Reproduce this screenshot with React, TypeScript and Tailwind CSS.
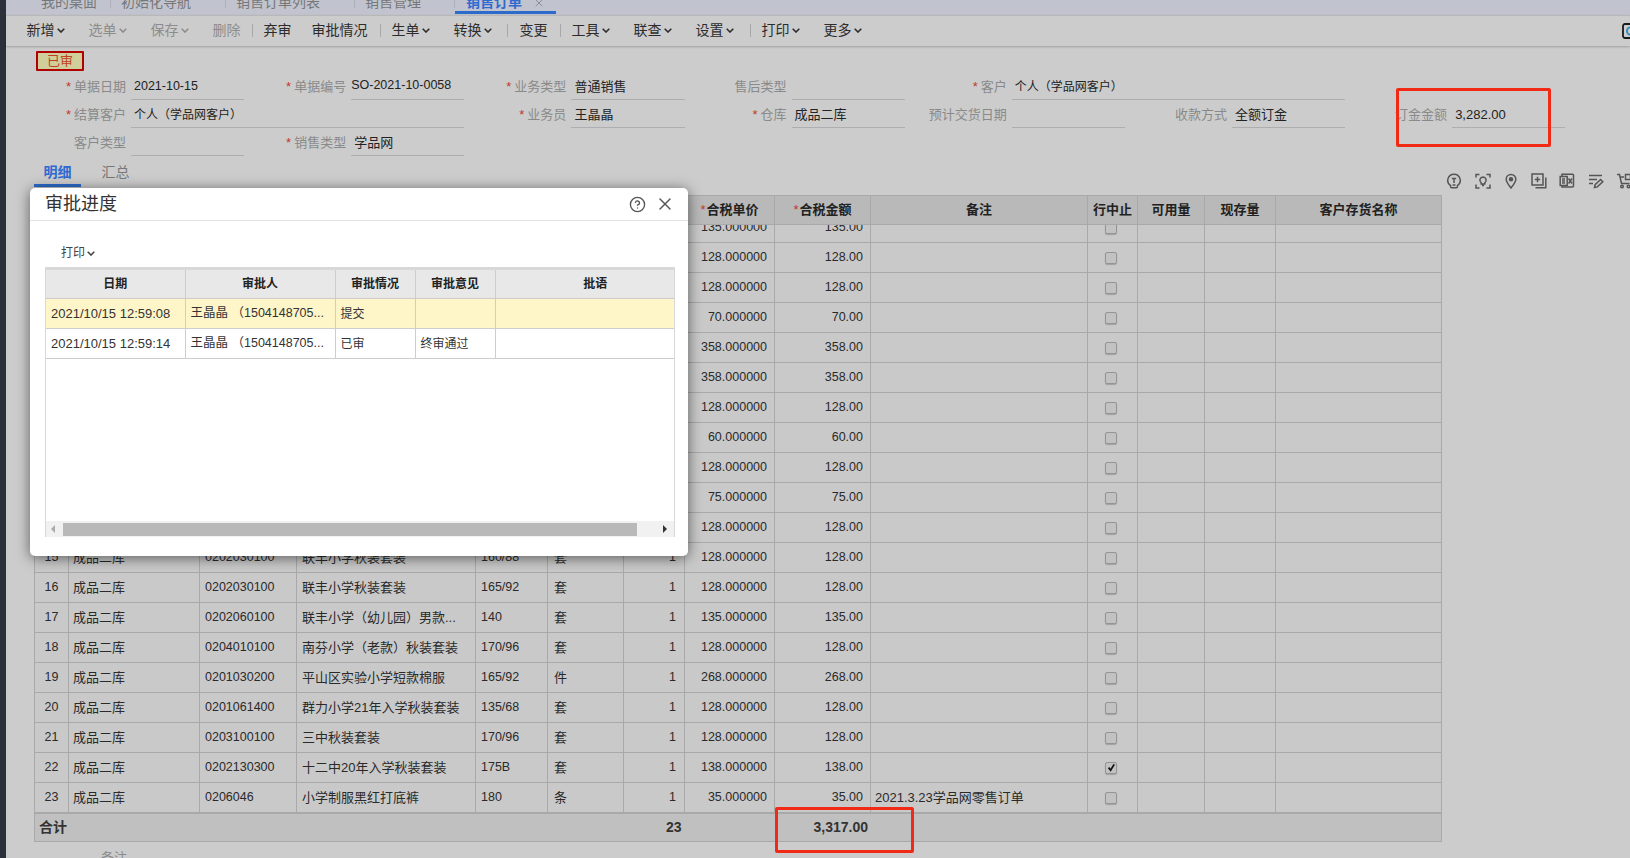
import { CircleHelp, X } from "lucide-react";

const Chev = () => (
  <svg viewBox="0 0 8 5" className="ml-[2px] w-[8px] h-[5px] shrink-0" fill="none" stroke="currentColor" strokeWidth="1.6">
    <path d="M0.7 0.8 L4 4 L7.3 0.8" />
  </svg>
);

const tools: { t: string; c?: boolean; d?: boolean; ml: string; sep?: boolean }[] = [
  { t: "新增", c: true, ml: "" },
  { t: "选单", c: true, d: true, ml: "ml-[24px]" },
  { t: "保存", c: true, d: true, ml: "ml-[24px]" },
  { t: "删除", d: true, ml: "ml-[24px]" },
  { t: "", sep: true, ml: "ml-[11px]" },
  { t: "弃审", ml: "ml-[11px]" },
  { t: "审批情况", ml: "ml-[20px]" },
  { t: "", sep: true, ml: "ml-[12px]" },
  { t: "生单", c: true, ml: "ml-[11px]" },
  { t: "转换", c: true, ml: "ml-[24px]" },
  { t: "", sep: true, ml: "ml-[15px]" },
  { t: "变更", ml: "ml-[12px]" },
  { t: "", sep: true, ml: "ml-[12px]" },
  { t: "工具", c: true, ml: "ml-[11px]" },
  { t: "联查", c: true, ml: "ml-[24px]" },
  { t: "设置", c: true, ml: "ml-[24px]" },
  { t: "", sep: true, ml: "ml-[16px]" },
  { t: "打印", c: true, ml: "ml-[11px]" },
  { t: "更多", c: true, ml: "ml-[24px]" },
];

const Field = ({ label, value, req, span, small, mono, date }: { label?: string; value?: string; req?: boolean; span?: boolean; small?: boolean; mono?: boolean; date?: boolean }) => (
  <div className={span ? "col-span-2 flex h-[28px]" : "flex h-[28px]"}>
    <div className="w-[107px] shrink-0 pr-[5px] pt-[2px] flex items-center justify-end text-[13px] text-[#8a8a8a] whitespace-nowrap">
      {req && <span className="text-[#c0392b] mr-[3px]">*</span>}
      {label}
    </div>
    <div
      className={
        "flex-1 border-b border-[#aeaeae] flex items-center text-[#222] whitespace-nowrap " +
        (mono
          ? "text-[12.5px] pb-[1px]"
          : date
            ? "text-[12.5px] pl-[3px] pt-[2px]"
            : small
              ? "text-[12px] pl-[3px] pt-[3px]"
              : "text-[13px] pl-[3px] pt-[3px]")
      }
    >
      {value}
    </div>
  </div>
);

type Row = [string, string, string, string, string, string, string, string, string, string, boolean];
const W = "成品二库";
const hidden = (price: string, amt: string): Row => ["", "", "", "", "", "", "", price, amt, "", false];
const rows: Row[] = [
  hidden("135.000000", "135.00"),
  hidden("128.000000", "128.00"),
  hidden("128.000000", "128.00"),
  hidden("70.000000", "70.00"),
  hidden("358.000000", "358.00"),
  hidden("358.000000", "358.00"),
  hidden("128.000000", "128.00"),
  hidden("60.000000", "60.00"),
  hidden("128.000000", "128.00"),
  hidden("75.000000", "75.00"),
  hidden("128.000000", "128.00"),
  ["15", W, "0202030100", "联丰小学秋装套装", "160/88", "套", "1", "128.000000", "128.00", "", false],
  ["16", W, "0202030100", "联丰小学秋装套装", "165/92", "套", "1", "128.000000", "128.00", "", false],
  ["17", W, "0202060100", "联丰小学（幼儿园）男款...", "140", "套", "1", "135.000000", "135.00", "", false],
  ["18", W, "0204010100", "南芬小学（老款）秋装套装", "170/96", "套", "1", "128.000000", "128.00", "", false],
  ["19", W, "0201030200", "平山区实验小学短款棉服", "165/92", "件", "1", "268.000000", "268.00", "", false],
  ["20", W, "0201061400", "群力小学21年入学秋装套装", "135/68", "套", "1", "128.000000", "128.00", "", false],
  ["21", W, "0203100100", "三中秋装套装", "170/96", "套", "1", "128.000000", "128.00", "", false],
  ["22", W, "0202130300", "十二中20年入学秋装套装", "175B", "套", "1", "138.000000", "138.00", "", true],
  ["23", W, "0206046", "小学制服黑红打底裤", "180", "条", "1", "35.000000", "35.00", "2021.3.23学品网零售订单", false],
];

const GRID = "grid grid-cols-[34px_131px_97px_179px_72px_76px_61px_90px_96px_217px_50px_67px_71px_166px]";
const C = "h-[30px] border-r border-b border-[#a9a9a9] flex items-center overflow-hidden whitespace-nowrap";
const H = "h-[29px] border-r border-b border-[#a9a9a9] flex items-center justify-center text-[13px] font-bold text-[#222] whitespace-nowrap";

const ic = { fill: "none", stroke: "#555", strokeWidth: 1.5, className: "w-[16px] h-[16px] shrink-0" } as const;
const Icons = () => (
  <div className="ml-auto -mr-[2px] mt-[17px] self-start flex gap-[12.3px]">
    <svg viewBox="0 0 16 16" {...ic}>
      <path d="M8 1.2a6.2 6.2 0 0 0-3.4 11.4v1.2c0 .6.4 1 1 1h4.8c.6 0 1-.4 1-1v-1.2A6.2 6.2 0 0 0 8 1.2z" />
      <path d="M5.8 5.5h4.4M8 5.5v4.5M6.5 12h3" />
    </svg>
    <svg viewBox="0 0 16 16" {...ic}>
      <path d="M1 4.5V1.5h3.5M11.5 1.5H15v3M15 11.5V15h-3.5M4.5 15H1v-3.5" />
      <path d="M8 4a3.2 3.2 0 0 0-1.8 5.8V11h3.6V9.8A3.2 3.2 0 0 0 8 4zM7 12.6h2" />
    </svg>
    <svg viewBox="0 0 16 16" {...ic}>
      <path d="M8 15C5.5 11.8 3.2 9 3.2 6.2a4.8 4.8 0 0 1 9.6 0C12.8 9 10.5 11.8 8 15z" />
      <circle cx="8" cy="6.2" r="1.5" fill="#555" />
    </svg>
    <svg viewBox="0 0 16 16" {...ic}>
      <rect x="1" y="1" width="11" height="11" />
      <path d="M14.8 4.5v10.3H4.5M6.5 3.8v5.4M3.8 6.5h5.4" />
    </svg>
    <svg viewBox="0 0 16 16" {...ic}>
      <path d="M3 3.5V1.2h10.5a1 1 0 0 1 1 1V13a1 1 0 0 1-1 1H3v-2" />
      <rect x="1.2" y="3.5" width="7" height="9" />
      <path d="M9.5 5.5l3.5 5M13 5.5l-3.5 5M3 6h3M3 8h3M3 10h3" />
    </svg>
    <svg viewBox="0 0 16 16" {...ic}>
      <path d="M1 2.5h13M1 6.5h8M1 10.5h4" />
      <path d="M6.5 14.5l.6-2.8 5.5-5.2 2.2 2.2-5.5 5.2z" />
    </svg>
    <svg viewBox="0 0 16 16" {...ic}>
      <path d="M1 1.5h2.5l2 9h8M4 4h4" />
      <rect x="9.5" y="1.5" width="5" height="5" />
      <circle cx="6" cy="13.5" r="1.3" />
      <circle cx="12.5" cy="13.5" r="1.3" />
    </svg>
  </div>
);

export default function App() {
  return (
    <div className="relative w-[1630px] h-[858px] overflow-hidden flex bg-[#cccccc] text-[#333] [font-family:'Liberation_Sans','Noto_Sans_CJK_SC',sans-serif]">
      <div className="w-[6px] shrink-0 bg-[#2b303b]" />
      <div className="flex-1 min-w-0 flex flex-col">
        {/* tab strip */}
        <div className="h-[15px] shrink-0 bg-[#c1c4ce] overflow-hidden flex text-[14px] text-[#777] pl-[35px]">
          <span className="-mt-[8px] leading-[20px] h-[20px]">我的桌面</span>
          <span className="ml-[13px] w-px h-[8px] bg-[#aeb0b8]" />
          <span className="ml-[10px] -mt-[8px] leading-[20px] h-[20px]">初始化导航</span>
          <span className="ml-[34px] w-px h-[8px] bg-[#aeb0b8]" />
          <span className="ml-[10px] -mt-[8px] leading-[20px] h-[20px]">销售订单列表</span>
          <span className="ml-[34px] w-px h-[8px] bg-[#aeb0b8]" />
          <span className="ml-[10px] -mt-[8px] leading-[20px] h-[20px]">销售管理</span>
          <span className="ml-[33px] w-px h-[8px] bg-[#aeb0b8]" />
          <div className="w-[101px] h-[14px] border-b-[3px] border-[#2c6bc9] pl-[11px] flex overflow-hidden">
            <span className="-mt-[8px] leading-[20px] h-[20px] font-bold text-[#2f6ad0]">销售订单</span>
            <X className="ml-[11px] -mt-[3px] w-[12px] h-[12px] text-[#8b8f99]" />
          </div>
        </div>
        {/* toolbar */}
        <div className="h-[31px] shrink-0 border-t border-[#b8b8b8] shadow-[0_1px_2px_rgba(0,0,0,0.22)] flex items-center pl-[20.5px] pb-[2px] text-[14px]">
          {tools.map((x, i) =>
            x.sep ? (
              <span key={i} className={x.ml + " w-px h-[13px] bg-[#a8a8a8]"} />
            ) : (
              <span key={i} className={x.ml + " flex items-center whitespace-nowrap " + (x.d ? "text-[#8c8c8c]" : "text-[#2c2c2c]")}>
                {x.t}
                {x.c && <Chev />}
              </span>
            )
          )}
          <div className="ml-auto w-[8px] h-[17px] overflow-hidden shrink-0">
            <svg viewBox="0 0 17 17" className="w-[17px] h-[17px]" fill="none">
              <rect x="1" y="2" width="15" height="14" rx="2" stroke="#1a1a1a" strokeWidth="1.8" />
              <circle cx="8.5" cy="9" r="3.6" stroke="#2b8ac4" strokeWidth="1.8" />
            </svg>
          </div>
        </div>
        {/* stamp */}
        <div className="ml-[30px] mt-[5px] w-[48px] h-[20px] shrink-0 border-2 border-[#b00000] rounded-[1px] bg-[#d0cf9c] flex items-center justify-center text-[13px] text-[#c0401f]">
          已审
        </div>
        {/* form */}
        <div className="mt-px ml-[18px] shrink-0 grid grid-cols-[repeat(7,220.2px)]">
          <Field req label="单据日期" value="2021-10-15" date />
          <Field req label="单据编号" value="SO-2021-10-0058" mono />
          <Field req label="业务类型" value="普通销售" />
          <Field label="售后类型" />
          <Field req label="客户" value="个人（学品网客户）" span small />
          <div />
          <Field req label="结算客户" value="个人（学品网客户）" span small />
          <Field req label="业务员" value="王晶晶" />
          <Field req label="仓库" value="成品二库" />
          <Field label="预计交货日期" />
          <Field label="收款方式" value="全额订金" />
          <Field label="订金金额" value="3,282.00" />
          <Field label="客户类型" />
          <Field req label="销售类型" value="学品网" />
        </div>
        {/* detail tabs */}
        <div className="h-[31px] shrink-0 flex pl-[28px]">
          <div className="w-[47px] border-b-[3px] border-[#2c6bc9] pt-[6px] flex justify-center text-[14px] font-bold text-[#2f6ad0] leading-[20px]">明细</div>
          <div className="ml-[11px] w-[47px] pt-[6px] flex justify-center text-[14px] text-[#777] leading-[20px]">汇总</div>
          <Icons />
        </div>
        {/* table */}
        <div className="mt-[8px] ml-[28px] w-[1408px] shrink-0 border-l border-[#a9a9a9]">
          <div className={GRID + " bg-[#b9b9b9] border-t border-[#a9a9a9]"}>
            {["", "", "", "", "", "", ""].map((_, i) => (
              <div key={i} className={H} />
            ))}
            <div className={H}><span className="text-[#c0392b] font-normal mr-[1px]">*</span>合税单价</div>
            <div className={H}><span className="text-[#c0392b] font-normal mr-[1px]">*</span>合税金额</div>
            <div className={H}>备注</div>
            <div className={H}>行中止</div>
            <div className={H}>可用量</div>
            <div className={H}>现存量</div>
            <div className={H}>客户存货名称</div>
          </div>
          <div className="h-[587px] overflow-hidden bg-[#c9c9c9]">
            <div className="-mt-[12px]">
              {rows.map((r, i) => (
                <div key={i} className={GRID + " text-[#2a2a2a]"}>
                  <div className={C + " justify-center text-[12.5px]"}>{r[0]}</div>
                  <div className={C + " pl-[4px] text-[13px]"}>{r[1]}</div>
                  <div className={C + " pl-[5px] text-[12.5px]"}>{r[2]}</div>
                  <div className={C + " pl-[5px] text-[13px]"}>{r[3]}</div>
                  <div className={C + " pl-[5px] text-[12.5px]"}>{r[4]}</div>
                  <div className={C + " pl-[6px] text-[13px]"}>{r[5]}</div>
                  <div className={C + " justify-end pr-[8px] text-[12.5px]"}>{r[6]}</div>
                  <div className={C + " justify-end pr-[7px] text-[12.5px]"}>{r[7]}</div>
                  <div className={C + " justify-end pr-[7px] text-[12.5px]"}>{r[8]}</div>
                  <div className={C + " pl-[4px] text-[13px]"}>{r[9]}</div>
                  <div className={C + " justify-center"}>
                    <span className="w-[12px] h-[12px] mr-[3px] rounded-[2px] border border-[#949494] bg-[#c2c2c2] shadow-[0_1px_1px_rgba(0,0,0,0.2)] flex items-center justify-center">
                      {r[10] && (
                        <svg viewBox="0 0 10 10" className="w-[9px] h-[9px]" fill="none" stroke="#111" strokeWidth="2">
                          <path d="M1.8 5.2 L4 8 L8 1.5" />
                        </svg>
                      )}
                    </span>
                  </div>
                  <div className={C} />
                  <div className={C} />
                  <div className={C} />
                </div>
              ))}
            </div>
          </div>
          <div className="h-[30px] bg-[#c0c0c0] border-t-2 border-b border-r border-[#a9a9a9] flex items-center text-[14px] font-bold text-[#333] whitespace-nowrap">
            <span className="ml-[4px]">合计</span>
            <span className="ml-auto mr-[132px]">23</span>
            <span className="mr-[573px]">3,317.00</span>
          </div>
        </div>
        <div className="mt-[9px] ml-[95px] shrink-0 text-[13px] text-[#8a8a8a] leading-[14px]">备注</div>
      </div>

      {/* dialog */}
      <div className="absolute left-[30px] top-[188px] w-[658px] h-[368px] bg-white rounded-[5px] shadow-[0_2px_14px_rgba(0,0,0,0.55)] flex flex-col">
        <div className="h-[33px] shrink-0 border-b border-[#e3e3e3] flex items-center pl-[15px] pr-[13px] text-[18px] text-[#333]">
          审批进度
          <CircleHelp className="ml-auto w-[17px] h-[17px] text-[#555]" strokeWidth={1.9} />
          <X className="ml-[9px] w-[20px] h-[20px] text-[#555]" strokeWidth={1.7} />
        </div>
        <div className="ml-[31px] mt-[25px] h-[14px] flex items-center text-[12px] text-[#444]">
          打印
          <Chev />
        </div>
        <div className="ml-[15px] mr-[13px] mt-[7px] flex-1 mb-[19px] border-t-[3px] border-x border-[#d8d8d8] flex flex-col">
          <div className="grid grid-cols-[139.5px_150px_80px_80px_1fr] h-[29px] bg-[#e8e8e8] border-b border-[#cdcdcd] text-[12px] font-bold text-[#222]">
            <div className="border-r border-[#cdcdcd] flex items-center justify-center">日期</div>
            <div className="border-r border-[#cdcdcd] flex items-center justify-center">审批人</div>
            <div className="border-r border-[#cdcdcd] flex items-center justify-center">审批情况</div>
            <div className="border-r border-[#cdcdcd] flex items-center justify-center">审批意见</div>
            <div className="flex items-center justify-center pl-[21px]">批语</div>
          </div>
          {[
            ["2021/10/15 12:59:08", "提交", "", "bg-[#fef5c9]"],
            ["2021/10/15 12:59:14", "已审", "终审通过", "bg-white"],
          ].map((r, i) => (
            <div key={i} className={"grid grid-cols-[139.5px_150px_80px_80px_1fr] h-[30px] border-b border-[#cdcdcd] text-[12px] text-[#333] " + r[3]}>
              <div className="border-r border-[#cdcdcd] flex items-center pl-[5px] text-[13px] whitespace-nowrap">{r[0]}</div>
              <div className="border-r border-[#cdcdcd] flex items-center pl-[5px] text-[12.5px] whitespace-pre">王晶晶 （1504148705...</div>
              <div className="border-r border-[#cdcdcd] flex items-center pl-[5px]">{r[1]}</div>
              <div className="border-r border-[#cdcdcd] flex items-center pl-[5px]">{r[2]}</div>
              <div />
            </div>
          ))}
          <div className="mt-auto h-[16px] bg-[#f1f1f1] flex items-center">
            <span className="ml-[5px] w-0 h-0 border-y-[4px] border-y-transparent border-r-[4px] border-r-[#aaa]" />
            <span className="ml-[8px] w-[574px] h-[13px] bg-[#b9b9b9]" />
            <span className="ml-[26px] w-0 h-0 border-y-[4px] border-y-transparent border-l-[4px] border-l-[#333]" />
          </div>
        </div>
      </div>

      {/* annotations */}
      <div className="absolute left-[1396px] top-[88px] w-[155px] h-[59px] border-[3px] border-[#f02a14] rounded-[2px]" />
      <div className="absolute left-[775px] top-[807px] w-[139px] h-[46px] border-[3px] border-[#f02a14] rounded-[2px]" />
    </div>
  );
}
